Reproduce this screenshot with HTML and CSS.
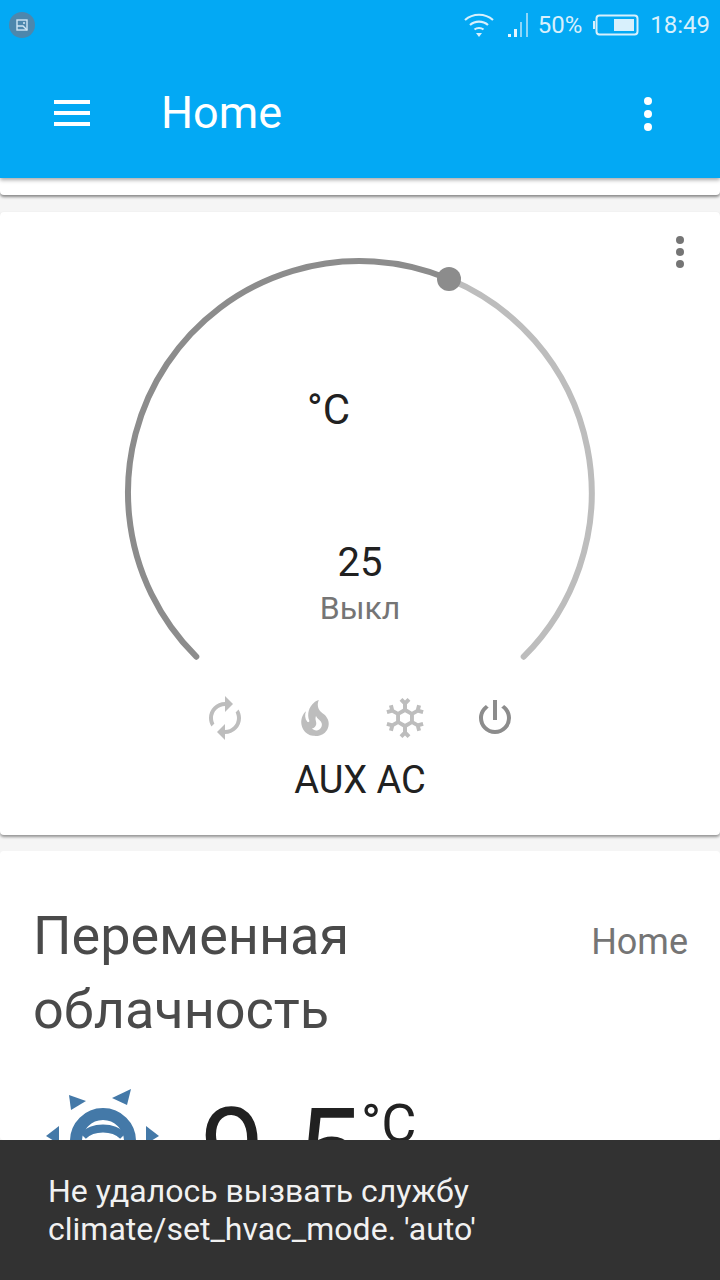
FILE: index.html
```html
<!DOCTYPE html>
<html>
<head>
    <meta charset="UTF-8">
    <title>Home</title>
    <link rel="stylesheet" href="styles.css">
</head>
<body>
    <header class="app-header">
        <!-- phone status bar -->
        <div class="status-bar">
            <div class="notif-dot">
                <svg width="14" height="14" viewBox="0 0 14 14" fill="none" stroke="#cfe6f5" stroke-width="1.4"><rect x="2" y="2" width="10" height="10"/><path d="M2 8h6l4 4M8 5h2"/></svg>
            </div>
            <div class="status-right">
                <svg class="wifi" width="32" height="26" viewBox="0 0 32 26" fill="none" stroke="#d8f0fc" stroke-width="2.2">
                    <path d="M2 8C10 1 22 1 30 8"/>
                    <path d="M7 13C12 8.500 20 8.500 25 13"/>
                    <path d="M11.500 17.500C14 15.500 18 15.500 20.500 17.500"/>
                    <path d="M13 21h6l-3 4z" fill="#d8f0fc" stroke="none"/>
                </svg>
                <svg class="signal" width="22" height="26" viewBox="0 0 22 26">
                    <rect x="0" y="22" width="3" height="3" fill="#e6f6fe"/>
                    <rect x="6" y="17" width="3" height="8" fill="#e6f6fe"/>
                    <rect x="12" y="10" width="2" height="15" fill="#8ed6f8"/>
                    <rect x="18" y="1" width="2" height="24" fill="#8ed6f8"/>
                </svg>
                <span class="status-text pct">50%</span>
                <svg class="battery" width="46" height="22" viewBox="0 0 46 22">
                    <rect x="0" y="7" width="2" height="8" fill="#d8f0fc"/>
                    <rect x="3.500" y="1.500" width="41" height="19" rx="3" fill="none" stroke="#d8f0fc" stroke-width="2"/>
                    <rect x="21" y="5" width="20" height="12" fill="#d8f0fc"/>
                </svg>
                <span class="status-text">18:49</span>
            </div>
        </div>
        <div class="toolbar">
            <div class="menu-btn"><span></span><span></span><span></span></div>
            <div class="toolbar-title">Home</div>
            <div class="dots dots-white"><span></span><span></span><span></span></div>
        </div>
    </header>

    <div class="card-sliver"></div>

    <section class="card climate">
        <div class="dots dots-grey"><span></span><span></span><span></span></div>
        <div class="dial">
            <svg class="dial-arc" width="720" height="470" viewBox="0 0 720 470" fill="none" stroke-width="6" stroke-linecap="round">
                <path d="M196.300 444.700A231.500 231.500 0 0 1 449 67" stroke="#8c8c8c"/>
                <path d="M449 67A231.500 231.500 0 0 1 523.700 444.700" stroke="#bdbdbd"/>
                <circle cx="449" cy="67" r="12" fill="#8c8c8c" stroke="none"/>
            </svg>
            <div class="dial-unit">°C</div>
            <div class="dial-target">25</div>
            <div class="dial-state">Выкл</div>
        </div>
        <div class="modes">
            <svg class="mode" viewBox="0 0 24 24"><path d="M12,6V9L16,5L12,1V4A8,8 0 0,0 4,12C4,13.57 4.46,15.03 5.24,16.26L6.7,14.8C6.25,13.97 6,13 6,12A6,6 0 0,1 12,6M18.76,7.74L17.3,9.2C17.74,10.04 18,11 18,12A6,6 0 0,1 12,18V15L8,19L12,23V20A8,8 0 0,0 20,12C20,10.43 19.54,8.97 18.76,7.74Z"/></svg>
            <svg class="mode" viewBox="0 0 24 24"><path d="M17.55,11.2C17.32,10.9 17.05,10.64 16.79,10.38C16.14,9.78 15.39,9.35 14.76,8.72C13.3,7.26 13,4.85 13.91,3C13,3.23 12.16,3.75 11.46,4.32C8.92,6.4 7.92,10.07 9.12,13.22C9.16,13.32 9.2,13.42 9.2,13.55C9.2,13.77 9.05,13.97 8.85,14.05C8.63,14.15 8.39,14.09 8.21,13.93C8.15,13.88 8.11,13.83 8.06,13.76C6.96,12.33 6.78,10.28 7.53,8.64C5.89,10 5,12.3 5.14,14.47C5.18,14.97 5.24,15.47 5.41,15.97C5.55,16.57 5.81,17.17 6.13,17.7C7.17,19.43 9,20.67 10.97,20.92C13.07,21.19 15.32,20.8 16.93,19.32C18.73,17.66 19.38,15 18.43,12.72L18.3,12.46C18.1,12 17.55,11.2 17.55,11.2M14.45,17.5C14.17,17.74 13.72,18 13.37,18.1C12.27,18.5 11.17,17.94 10.5,17.28C11.69,17 12.39,16.12 12.59,15.23C12.76,14.43 12.45,13.77 12.32,13C12.2,12.26 12.22,11.63 12.5,10.94C12.69,11.32 12.89,11.7 13.13,12C13.9,13 15.11,13.44 15.37,14.8C15.41,14.94 15.43,15.08 15.43,15.23C15.46,16.05 15.1,16.95 14.45,17.5H14.45Z"/></svg>
            <svg class="mode" viewBox="0 0 24 24"><path d="M20.79,13.95L18.46,14.57L16.46,13.44V10.56L18.46,9.43L20.79,10.05L21.31,8.12L19.54,7.65L20,5.88L18.07,5.36L17.45,7.69L15.45,8.82L13,7.38V5.12L14.71,3.41L13.29,2L12,3.29L10.71,2L9.29,3.41L11,5.12V7.38L8.5,8.82L6.5,7.69L5.92,5.36L4,5.88L4.47,7.65L2.7,8.12L3.22,10.05L5.55,9.43L7.55,10.56V13.45L5.55,14.58L3.22,13.96L2.7,15.89L4.47,16.36L4,18.12L5.93,18.64L6.55,16.31L8.55,15.18L11,16.62V18.88L9.29,20.59L10.71,22L12,20.71L13.29,22L14.7,20.59L13,18.88V16.62L15.5,15.17L17.5,16.3L18.12,18.63L20,18.12L19.53,16.35L21.3,15.88L20.79,13.95M9.5,10.56L12,9.11L14.5,10.56V13.44L12,14.89L9.5,13.44V10.56Z"/></svg>
            <svg class="mode mode-active" viewBox="0 0 24 24"><path d="M16.56,5.44L15.11,6.89C16.84,7.94 18,9.83 18,12A6,6 0 0,1 12,18A6,6 0 0,1 6,12C6,9.83 7.16,7.94 8.88,6.88L7.44,5.44C5.36,6.88 4,9.28 4,12A8,8 0 0,0 12,20A8,8 0 0,0 20,12C20,9.28 18.64,6.88 16.56,5.44M13,3H11V13H13"/></svg>
        </div>
        <div class="climate-name">AUX AC</div>
    </section>

    <section class="card weather">
        <div class="weather-head">
            <div class="weather-state">Переменная облачность</div>
            <div class="weather-place">Home</div>
        </div>
        <div class="weather-now">
            <svg class="weather-icon" width="120" height="120" viewBox="0 0 120 120" fill="#4479a8">
                <circle cx="60" cy="57" r="27" fill="none" stroke="#4479a8" stroke-width="12"/>
                <path d="M40 52C50 42 70 42 80 52" fill="none" stroke="#4479a8" stroke-width="8"/>
                <path d="M26 11L43 17L28 26z"/>
                <path d="M88 5L69 14L84 21z"/>
                <path d="M103 42L116 52L103 60z"/>
                <path d="M16 42L3 52L16 60z"/>
            </svg>
            <div class="temp">9.5</div>
            <div class="temp-unit">°C</div>
        </div>
    </section>

    <div class="snackbar">Не удалось вызвать службу climate/set_hvac_mode. 'auto'</div>
</body>
</html>
```

FILE: styles.css
```css
html, body {
    margin: 0;
    height: 1280px;
    overflow: hidden;
}
body {
    background-color: #f5f5f5;
    font-family: Roboto, sans-serif;
    color: #212121;
}
/* Header */
.app-header {
    background-color: #03a9f4;
    height: 178px;
    position: relative;
    z-index: 2;
    box-shadow: 0 2px 4px rgba(0, 0, 0, 0.35);
}
.status-bar {
    height: 48px;
    padding: 2px 10px 0 9px;
    box-sizing: border-box;
    display: flex;
    align-items: center;
    justify-content: space-between;
}
.notif-dot {
    width: 26px;
    height: 26px;
    border-radius: 50%;
    background-color: #4d87ad;
    display: flex;
    align-items: center;
    justify-content: center;
}
.status-right {
    display: flex;
    align-items: center;
}
.wifi {
    margin-right: 13px;
}
.signal {
    margin-right: 8px;
}
.status-text {
    color: #d8f0fc;
    font-size: 24px;
}
.pct {
    margin-right: 11px;
}
.battery {
    margin-right: 11px;
}
.toolbar {
    height: 130px;
    padding: 0 54px;
    box-sizing: border-box;
    display: flex;
    align-items: center;
}
.menu-btn {
    width: 36px;
    display: flex;
    flex-direction: column;
    gap: 7px;
    margin-right: 71px;
}
.menu-btn span {
    height: 4px;
    background-color: #fff;
}
.toolbar-title {
    flex: 1;
    color: #fff;
    font-size: 45px;
    margin-top: -2px;
}
.dots {
    display: flex;
    flex-direction: column;
}
.dots span {
    width: 8px;
    height: 8px;
    border-radius: 50%;
}
.dots-white {
    gap: 5px;
    margin-right: 14px;
    margin-top: 2px;
}
.dots-white span {
    background-color: #fff;
}
.dots-grey {
    gap: 4px;
    position: absolute;
    top: 24px;
    right: 36px;
}
.dots-grey span {
    background-color: #757575;
}
/* Cards */
.card-sliver {
    height: 17px;
    background-color: #fff;
    box-shadow: 0 2px 3px rgba(0, 0, 0, 0.45);
    border-radius: 0 0 4px 4px;
    margin-bottom: 17px;
}
.card {
    background-color: #fff;
    border-radius: 4px;
    position: relative;
}
.climate {
    height: 623px;
    box-shadow: 0 2px 3px rgba(0, 0, 0, 0.4);
    margin-bottom: 16px;
}
.dial {
    height: 470px;
    position: relative;
    display: flex;
    flex-direction: column;
    align-items: center;
}
.dial-arc {
    position: absolute;
    top: 0;
    left: 0;
}
.dial-unit {
    font-size: 42px;
    line-height: 48px;
    margin-top: 174px;
    margin-right: 63px;
}
.dial-target {
    font-size: 40px;
    line-height: 48px;
    margin-top: 105px;
}
.dial-state {
    color: #757575;
    font-size: 32px;
    line-height: 48px;
    margin-top: -3px;
}
.modes {
    display: flex;
    justify-content: center;
    gap: 42px;
    margin-top: 12px;
}
.mode {
    width: 48px;
    height: 48px;
    fill: #bdbdbd;
}
.mode-active {
    fill: #8c8c8c;
}
.climate-name {
    font-size: 38px;
    line-height: 48px;
    text-align: center;
    margin-top: 14px;
}
.weather {
    height: 289px;
    overflow: hidden;
    padding: 48px 32px 0 33px;
    box-sizing: border-box;
}
.weather-head {
    display: flex;
    justify-content: space-between;
    align-items: flex-start;
}
.weather-state {
    width: 400px;
    font-size: 54px;
    line-height: 74px;
    color: #4a4a4a;
}
.weather-place {
    font-size: 36px;
    line-height: 86px;
    color: #757575;
}
.weather-now {
    display: flex;
    align-items: flex-start;
    margin-top: 36px;
    margin-left: -33px;
}
.weather-icon {
    margin-left: 43px;
    margin-top: 1px;
}
.temp {
    font-size: 116px;
    line-height: 136px;
    margin-left: 37px;
}
.temp-unit {
    font-size: 54px;
    line-height: 64px;
    margin-top: 9px;
}
/* Error toast */
.snackbar {
    position: fixed;
    left: 0;
    right: 0;
    bottom: 0;
    height: 140px;
    box-sizing: border-box;
    padding: 32px 200px 0 48px;
    background-color: #323232;
    color: #f1f1f1;
    font-size: 32px;
    line-height: 38px;
    z-index: 3;
}
```
